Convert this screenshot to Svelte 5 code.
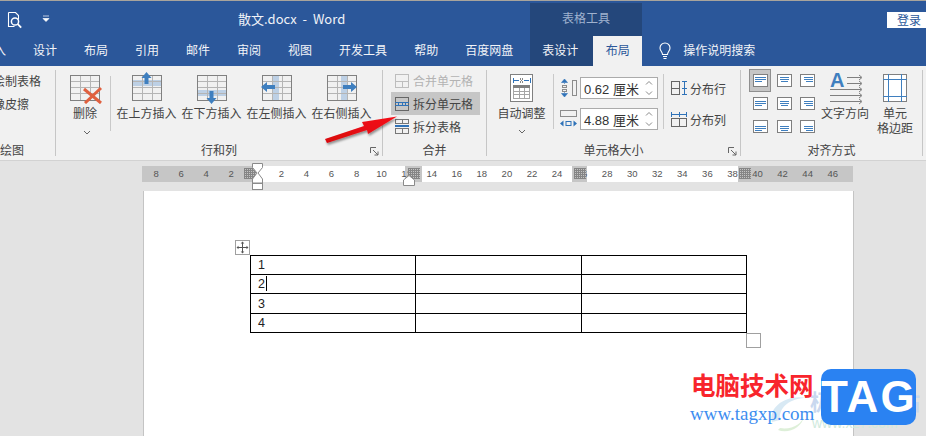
<script>
  const tabs = ['插入','设计','布局','引用','邮件','审阅','视图','开发工具','帮助','百度网盘'];
  const rulerNums = ['8','6','4','2','','2','4','6','8','10','12','14','16','18','20','22','24','26','28','30','32','34','36','38','40','42','44','46'];
  const markers = [244, 408, 574, 739];
  const gridX = [0, 10, 20, 29];
  const gridY = [0, 6, 12, 18, 25];
  const inner = [...Array(9).keys()];
  const rows = ['1','2','3','4'];
  function lineX(col, w) { return col === 0 ? 2 : col === 1 ? 3 : 13 - w; }
  function lineY(row, i) { return (row === 0 ? 2.5 : row === 1 ? 4 : 6) + i * 2; }
</script>

{#snippet grid(x, y)}
  <g transform="translate({x} {y})" shape-rendering="crispEdges">
    {#each gridX.slice(1, 3) as gx}<path d="M{gx + 0.5} 0V25" stroke="#b5b5b5" fill="none" />{/each}
    {#each gridY.slice(1, 4) as gy}<path d="M0 {gy + 0.5}H29" stroke="#b5b5b5" fill="none" />{/each}
    <rect x="0.5" y="0.5" width="29" height="25" fill="none" stroke="#808080" />
  </g>
{/snippet}

<div class="app">
  <header class="titlebar">
    <svg class="preview" width="16" height="20" viewBox="0 0 16 20">
      <path d="M1.5 2.5h7l3 3v4M1.5 2.5v14h6" fill="none" stroke="#fff" stroke-width="1.1" />
      <circle cx="8" cy="11.5" r="3.6" fill="none" stroke="#fff" stroke-width="1.5" />
      <path d="M10.8 14.2l3.4 3.4" stroke="#fff" stroke-width="1.8" />
    </svg>
    <svg class="qa" width="8" height="8" viewBox="0 0 8 8"><path d="M1 1h6M1 3.5h6l-3 3z" fill="#fff" stroke="#fff" stroke-width="0.7" /></svg>
    <div class="doc">散文.docx&nbsp; - &nbsp;Word</div>
    <div class="ctx-head">表格工具</div>
    <button class="login">登录</button>
  </header>

  <nav class="tabs">
    {#each tabs as t}<span class="tab">{t}</span>{/each}
    <span class="tab ctx">表设计</span>
    <span class="tab active">布局</span>
    <svg class="bulb" width="16" height="18" viewBox="0 0 16 18">
      <path d="M5.5 12.5c0-2.5-2.5-3.500-2.500-6.500a5 5 0 0 1 10 0c0 3-2.500 4-2.500 6.500z" fill="none" stroke="#fff" stroke-width="1.100" />
      <path d="M6 14.500h4M6.500 16.500h3" stroke="#fff" stroke-width="1.100" />
    </svg>
    <span class="search">操作说明搜索</span>
  </nav>

  <section class="ribbon">
    <div class="group g-draw">
      <div class="body draw">
        <div class="draw-row a">绘制表格</div>
        <div class="draw-row b">橡皮擦</div>
      </div>
      <div class="label">绘图</div>
    </div>

    <div class="group g-rows">
      <div class="body rowbtns">
        <div class="big del">
          <svg width="36" height="32" viewBox="0 0 36 32">
            {@render grid(3, 3)}
            <path d="M17 17L34 31M34 16L18 31" stroke="#e0603f" stroke-width="3" fill="none" />
          </svg>
          <span>删除</span>
          <svg class="chev" width="8" height="5" viewBox="0 0 8 5"><path d="M1 1l3 3 3-3" fill="none" stroke="#666" /></svg>
        </div>
        <div class="vsep s1"></div>
        <div class="big ins">
          <svg width="36" height="32" viewBox="0 0 36 32">
            <rect x="3" y="8" width="29" height="6" fill="#bdd0e5" />
            {@render grid(3, 3)}
            <path d="M17.500 0l5 6h-3v6h-4V6h-3z" fill="#3f7fbf" />
          </svg>
          <span>在上方插入</span>
        </div>
        <div class="big ins">
          <svg width="36" height="32" viewBox="0 0 36 32">
            <rect x="3" y="18" width="29" height="6" fill="#bdd0e5" />
            {@render grid(3, 3)}
            <path d="M15.500 19h4v7h3l-5 6-5-6h3z" fill="#3f7fbf" />
          </svg>
          <span>在下方插入</span>
        </div>
        <div class="big ins">
          <svg width="36" height="32" viewBox="0 0 36 32">
            <rect x="13" y="3" width="7" height="25" fill="#bdd0e5" />
            {@render grid(3, 3)}
            <path d="M2 15l6-5v3h8v4H8v3z" fill="#3f7fbf" />
          </svg>
          <span>在左侧插入</span>
        </div>
        <div class="big ins">
          <svg width="36" height="32" viewBox="0 0 36 32">
            <rect x="17" y="3" width="7" height="25" fill="#bdd0e5" />
            {@render grid(3, 3)}
            <path d="M33 15l-6-5v3h-8v4h8v3z" fill="#3f7fbf" />
          </svg>
          <span>在右侧插入</span>
        </div>
      </div>
      <div class="label">行和列</div>
      <svg class="launch" width="9" height="9" viewBox="0 0 9 9"><path d="M.5 6V.5H6M3 3l5 5M8 4.500V8H4.500" fill="none" stroke="#666" /></svg>
    </div>

    <div class="group g-merge">
      <div class="body merge">
        <div class="mrow dim">
          <svg width="14" height="14" viewBox="0 0 14 14" shape-rendering="crispEdges"><path d="M.5.500h13v13H.500zM.5 7h13M7 7v6.500" fill="none" stroke="#bdbdbd" /></svg>
          <span>合并单元格</span>
        </div>
        <div class="mrow hot">
          <svg width="14" height="14" viewBox="0 0 14 14" shape-rendering="crispEdges"><path d="M.5.500h13v13H.500z" fill="none" stroke="#666" /><path d="M0 5.500h14M0 8.500h14M3.500 5v4M7 5v4M10.500 5v4" fill="none" stroke="#2f72b8" /></svg>
          <span>拆分单元格</span>
        </div>
        <div class="mrow">
          <svg width="14" height="15" viewBox="0 0 14 15" shape-rendering="crispEdges"><path d="M.5.500h13v4H.500zM.5 9.500h13v5H.500zM7 9.500v5M7 .5v4" fill="none" stroke="#777" /><path d="M0 7h14" stroke="#2f72b8" stroke-width="1.500" /></svg>
          <span>拆分表格</span>
        </div>
      </div>
      <div class="label">合并</div>
    </div>

    <div class="group g-size">
      <div class="body sizes">
        <div class="big auto">
          <svg width="24" height="28" viewBox="0 0 24 28" shape-rendering="crispEdges">
            <rect x=".5" y=".5" width="22" height="27" fill="#fff" stroke="#808080" />
            <path d="M3 4v5M20 4v5M4 6.500h5M14 6.500h5" stroke="#2f72b8" fill="none" />
            <path d="M10 4.500l3 4M13 4.500l-3 4" stroke="#888" fill="none" />
            <rect x="3" y="11" width="17" height="3" fill="#7f7f7f" />
            <path d="M3.500 14v10h16V14M3 17.500h17M3 20.500h17M9 14v10M14 14v10" fill="none" stroke="#a5a5a5" />
          </svg>
          <span>自动调整</span>
          <svg class="chev" width="8" height="5" viewBox="0 0 8 5"><path d="M1 1l3 3 3-3" fill="none" stroke="#666" /></svg>
        </div>
        <div class="vsep s2"></div>
        <div class="spins">
          <div class="spin">
            <svg width="17" height="18" viewBox="0 0 17 18">
              <rect x="12.500" y="1.500" width="4" height="15" fill="none" stroke="#8c8c8c" />
              <path d="M4.500 0l3 3.500h-6zM4.500 18l3-3.500h-6zM4.500 4v1M4.500 13v1" fill="#2f72b8" stroke="#2f72b8" stroke-width=".6" />
              <rect x="2.500" y="6.500" width="4" height="2" fill="none" stroke="#8c8c8c" /><rect x="2.500" y="10.500" width="4" height="2" fill="none" stroke="#8c8c8c" />
            </svg>
            <div class="input"><span>0.62 厘米</span>
              <svg width="8" height="16" viewBox="0 0 8 16"><path d="M1 4.500l3-3 3 3M1 11.500l3 3 3-3" fill="none" stroke="#8a8a8a" /></svg>
            </div>
          </div>
          <div class="spin">
            <svg width="17" height="18" viewBox="0 0 17 18">
              <rect x=".5" y=".5" width="16" height="6" fill="none" stroke="#8c8c8c" />
              <path d="M0 13.500l3.500-3v6zM17 13.500l-3.500-3v6z" fill="#2f72b8" />
              <rect x="6" y="11.500" width="5" height="4" fill="none" stroke="#2f72b8" />
            </svg>
            <div class="input"><span>4.88 厘米</span>
              <svg width="8" height="16" viewBox="0 0 8 16"><path d="M1 4.500l3-3 3 3M1 11.500l3 3 3-3" fill="none" stroke="#8a8a8a" /></svg>
            </div>
          </div>
        </div>
        <div class="vsep s3"></div>
        <div class="dist">
          <div class="drow">
            <svg width="16" height="14" viewBox="0 0 16 14" shape-rendering="crispEdges"><path d="M.5.500h8v13h-8zM.5 7h8" fill="none" stroke="#666" /><path d="M11 .5h5M11 13.500h5M13.500 0v14" fill="none" stroke="#2f72b8" /><path d="M11 7h5" stroke="#2f72b8" /></svg>
            <span>分布行</span>
          </div>
          <div class="drow">
            <svg width="16" height="15" viewBox="0 0 16 15" shape-rendering="crispEdges"><path d="M.5 6.500h15v8H.5zM8 6.500v8" fill="none" stroke="#666" /><path d="M.5 0v5M8 0v5M15.500 0v5M0 2.500h16" fill="none" stroke="#2f72b8" /></svg>
            <span>分布列</span>
          </div>
        </div>
      </div>
      <div class="label">单元格大小</div>
      <svg class="launch" width="9" height="9" viewBox="0 0 9 9"><path d="M.5 6V.5H6M3 3l5 5M8 4.500V8H4.500" fill="none" stroke="#666" /></svg>
    </div>

    <div class="group g-align">
      <div class="body aligns">
        <div class="agrid">
          {#each inner as n}
            <div class="acell" class:sel={n === 0}>
              <svg width="15" height="13" viewBox="0 0 15 13" shape-rendering="crispEdges">
                <rect x=".5" y=".5" width="14" height="12" fill="#fff" stroke="#7f7f7f" />
                {#each [0, 1, 2] as i}
                  <rect x={lineX(n % 3, n % 3 === 0 ? 11 : 9) + (i === 2 && n % 3 !== 0 ? (n % 3 === 1 ? 1 : 2) : 0)} y={lineY(Math.floor(n / 3), i)} width={n % 3 === 0 ? (i === 2 ? 7 : 11) : (i === 2 ? 7 : 9)} height="1" fill="#3f7fbf" />
                {/each}
              </svg>
            </div>
          {/each}
        </div>
        <div class="big dir">
          <svg width="36" height="32" viewBox="0 0 36 32">
            <text x="3" y="14" class="bigA">A</text>
            <path d="M20 4.500h14M20 10.500h14M3 16.500h31M3 22.500h31M3 28.500h31" stroke="#7f7f7f" fill="none" />
            <path d="M32 2l3 2.500-3 2.500M32 8l3 2.500-3 2.500M32 14l3 2.500-3 2.500M32 20l3 2.500-3 2.500M32 26l3 2.500-3 2.500" stroke="#7f7f7f" fill="none" />
          </svg>
          <span>文字方向</span>
        </div>
        <div class="big margin">
          <svg width="24" height="28" viewBox="0 0 24 28" shape-rendering="crispEdges">
            <rect x=".5" y=".5" width="23" height="27" fill="#fff" stroke="#808080" />
            <path d="M5.500 0v28M18.500 0v28M0 5.500h24M0 22.500h24" stroke="#3f7fbf" fill="none" />
          </svg>
          <span>单元<br />格边距</span>
        </div>
      </div>
      <div class="label">对齐方式</div>
    </div>
  </section>

  <main class="canvas">
    <div class="ruler">
      <div class="band">
        {#each rulerNums as num}<span class="num">{num}</span>{/each}
      </div>
      {#each markers as left}<i class="mark" style:left="{left - 142}px"></i>{/each}
      <svg class="indent" width="13" height="28" viewBox="0 0 13 28">
        <path d="M1.500 .5h10v4L7 10l4.500 6v4h-10v-4L6 10 1.500 4.500z" fill="#fff" stroke="#8a8a8a" />
        <rect x="1.500" y="20.500" width="10" height="6" fill="#fff" stroke="#8a8a8a" />
      </svg>
      <svg class="rindent" width="12" height="11" viewBox="0 0 12 11"><path d="M.5 10.500V5L6 .5 11.500 5v5.500z" fill="#fff" stroke="#8a8a8a" /></svg>
    </div>

    <div class="page">
      <div class="tablewrap">
        <svg class="move" width="15" height="15" viewBox="0 0 15 15">
          <rect x=".5" y=".5" width="14" height="14" fill="#fff" stroke="#a0a0a0" />
          <path d="M7.500 2.500v10M2.500 7.500h10" stroke="#555" />
          <path d="M7.500 1.500l1.800 2h-3.600zM7.500 13.500l1.800-2h-3.600zM1.500 7.500l2-1.800v3.600zM13.500 7.500l-2-1.800v3.600z" fill="#555" />
        </svg>
        <table>
          <tbody>
            {#each rows as r, i}
              <tr class:tall={i === 2}>
                <td>{r}{#if i === 1}<i class="caret"></i>{/if}</td><td></td><td></td>
              </tr>
            {/each}
          </tbody>
        </table>
        <div class="end"></div>
      </div>
    </div>
  </main>

  <svg class="arrow" width="926" height="436" viewBox="0 0 926 436">
    <defs>
      <linearGradient id="red" x1="0" y1="1" x2="1" y2="0">
        <stop offset="0" stop-color="#d8060c" />
        <stop offset="1" stop-color="#f5121a" />
      </linearGradient>
      <filter id="sh" x="-20%" y="-30%" width="140%" height="170%"><feDropShadow dx="1" dy="2" stdDeviation="1.200" flood-color="#000" flood-opacity=".4" /></filter>
    </defs>
    <polygon points="325,139 364,126 362,122 397,116.500 368,134 367,130 327,143" fill="url(#red)" filter="url(#sh)" />
  </svg>

  <div class="mark-site">
    <div class="faint cn">极光下载站</div>
    <div class="faint en">www.xz7.com</div>
    <svg class="swirl" width="46" height="46" viewBox="0 0 46 46"><path d="M6 32C2 16 22 4 40 8 24 8 12 18 14 30" fill="#c8dff0" opacity=".7" /><path d="M12 40c10 4 24-2 26-14-2 8-12 14-24 12z" fill="#cfe8c8" opacity=".7" /></svg>
    <div class="site">电脑技术网</div>
    <div class="url">www.tagxp.com</div>
    <div class="tag">TAG</div>
  </div>
</div>

<style>
  :global(body) { margin: 0; }
  .app {
    position: relative;
    width: 926px;
    height: 436px;
    overflow: hidden;
    display: flex;
    flex-direction: column;
    background: #e3e3e3;
    font-family: "Noto Sans CJK SC", "Liberation Sans", sans-serif;
    font-size: 12px;
    color: #444;
    border-top: 1px solid #a8a49c;
    box-sizing: border-box;
  }
  svg { display: block; flex: none; }

  .titlebar {
    height: 35px;
    flex: none;
    background: #2b579a;
    display: flex;
    align-items: flex-start;
    color: #fff;
  }
  .preview { margin: 9px 0 0 7px; }
  .qa { margin: 14px 0 0 19px; }
  .doc { width: 292px; margin-left: 188px; margin-top: 9px; font-size: 13px; line-height: 18px; color: #f0f3f8; white-space: nowrap; }
  .ctx-head {
    margin-top: 2px;
    width: 112px;
    height: 33px;
    background: #24477b;
    color: #9fb2cf;
    text-align: center;
    line-height: 30px;
  }
  .login {
    margin: 11px 0 0 245px;
    width: 39px;
    height: 16px;
    padding: 0 0 0 5px;
    border: 0;
    background: #fff;
    color: #2b579a;
    font: inherit;
    line-height: 16px;
  }

  .tabs {
    height: 30px;
    flex: none;
    background: #2b579a;
    display: flex;
    align-items: stretch;
    margin-left: -31.5px;
    color: #f2f4f8;
    white-space: nowrap;
  }
  .tab { padding: 0 13.5px; line-height: 28px; flex: none; }
  .tab.ctx { background: #24477b; width: 36px; padding: 0 15px 0 12px; margin-left: 3.5px; }
  .tab.active { background: #f1f1f1; color: #2b579a; padding: 0 12.5px; }
  .bulb { margin: 6px 0 0 15px; }
  .search { margin-left: 10px; line-height: 28px; }

  .ribbon {
    height: 95px;
    flex: none;
    box-sizing: border-box;
    background: #f1f1f1;
    border-bottom: 1px solid #d2d2d2;
    display: flex;
    padding-top: 4px;
  }
  .group {
    position: relative;
    display: flex;
    flex-direction: column;
    height: 86px;
    box-sizing: border-box;
    border-right: 1px solid #c6c6c6;
    flex: none;
  }
  .body { height: 71px; flex: none; display: flex; }
  .label { height: 15px; line-height: 17px; text-align: center; color: #444; white-space: nowrap; }
  .launch { position: absolute; right: 3px; bottom: 0; }
  .g-draw { width: 56px; overflow: hidden; }
  .g-rows { width: 327px; }
  .g-merge { width: 104px; }
  .g-size { width: 254px; }
  .g-align { width: 182px; }

  .draw { flex-direction: column; align-items: flex-end; margin-top: -1px; margin-bottom: 1px; }
  .draw-row { white-space: nowrap; height: 23px; line-height: 23px; }
  .draw-row.a { margin-right: 14px; }
  .draw-row.b { margin-right: 26px; }
  .g-draw .label { text-align: right; padding-right: 34px; }

  .big { display: flex; flex-direction: column; align-items: center; white-space: nowrap; }
  .big span { line-height: 16px; text-align: center; }
  .big > svg:first-child { height: 32px; }
  .big .chev { margin-top: 7px; }
  .rowbtns { padding-left: 7px; padding-top: 2px; box-sizing: border-box; }
  .del { width: 44px; }
  .ins { width: 65px; }
  .ins span, .del span { margin-top: 1px; }
  .del .chev { margin-top: 9px; margin-left: 4px; }
  .vsep { width: 1px; background: #c9c9c9; height: 55px; margin-top: 4px; flex: none; }
  .s1 { margin: 4px 3px 0 3px; }

  .merge { flex-direction: column; padding-left: 8px; margin-top: -1px; margin-bottom: 1px; }
  .mrow {
    width: 89px;
    height: 23px;
    flex: none;
    box-sizing: border-box;
    display: flex;
    align-items: center;
    gap: 4px;
    padding-left: 4px;
    color: #444;
  }
  .mrow.dim { color: #b3b3b3; }
  .mrow.hot { background: #c6c6c6; }

  .sizes { padding-left: 4px; padding-top: 4px; box-sizing: border-box; }
  .auto { width: 61px; }
  .auto > svg:first-child { height: 28px; }
  .auto span { margin-top: 3px; }
  .auto .chev { margin-top: 8px; }
  .s2 { margin: 0 6px 0 1px; }
  .spins { display: flex; flex-direction: column; gap: 9px; margin-top: 3px; }
  .spin { display: flex; align-items: center; gap: 3px; height: 22px; }
  .input {
    width: 78px;
    height: 22px;
    box-sizing: border-box;
    background: #fff;
    border: 1px solid #ababab;
    display: flex;
    align-items: center;
    justify-content: space-between;
    padding: 0 4px 0 3px;
    font-size: 13px;
    color: #333;
    white-space: pre;
  }
  .input span { font-family: "Liberation Sans", "Noto Sans CJK SC", sans-serif; }
  .s3 { margin: 0 7px 0 5px; }
  .dist { display: flex; flex-direction: column; gap: 9px; margin-top: 3px; }
  .drow { display: flex; align-items: center; gap: 3px; height: 22px; }

  .aligns { padding-left: 8px; }
  .agrid {
    display: grid;
    grid-template-columns: repeat(3, 23.5px);
    grid-template-rows: 23px 23px 23px;
    width: 71px;
    margin-top: -1px;
  }
  .acell { display: flex; align-items: center; justify-content: center; box-sizing: border-box; }
  .acell.sel { background: #c6c6c6; border: 1px solid #8f8f8f; width: 22px; }
  .dir { width: 48px; margin-left: 1px; padding-top: 3px; }
  .dir svg { height: 32px; }
  .bigA { font: 700 20px "Liberation Sans", sans-serif; fill: #3f7fbf; }
  .margin { width: 36px; margin-left: 8px; padding-top: 4px; }
  .margin > svg:first-child { height: 28px; }
  .margin span { margin-top: 3px; line-height: 15px; }

  .canvas { flex: 1; min-height: 0; display: flex; flex-direction: column; }
  .ruler { position: relative; height: 30px; flex: none; margin-left: 142px; width: 711px; padding-top: 5px; box-sizing: border-box; }
  .band {
    height: 16px;
    display: flex;
    padding-left: 1.500px;
    box-sizing: border-box;
    background: linear-gradient(90deg,
      #c6c6c6 0 114px, #fff 114px 263px, #c6c6c6 263px 280px, #fff 280px 430px,
      #c6c6c6 430px 445px, #fff 445px 596px, #c6c6c6 596px 711px);
  }
  .num {
    width: 25.070px;
    flex: none;
    text-align: center;
    font: 9.500px/16px "Liberation Sans", sans-serif;
    color: #555;
  }
  .mark {
    position: absolute;
    top: 7px;
    width: 12px;
    height: 11px;
    background-color: #c4c4c4;
    background-image:
      repeating-linear-gradient(90deg, #858585 0 1px, transparent 1px 2px),
      repeating-linear-gradient(0deg, #858585 0 1px, transparent 1px 2px);
  }
  .indent { position: absolute; left: 109px; top: 2px; }
  .rindent { position: absolute; left: 261px; top: 14px; }

  .page {
    flex: 1;
    margin-left: 143px;
    width: 711px;
    box-sizing: border-box;
    background: #fff;
    border-left: 1px solid #c4c4c4;
    border-right: 1px solid #c4c4c4;
    padding: 64px 0 0 106px;
  }
  .tablewrap { position: relative; width: 497px; }
  .move { position: absolute; left: -15px; top: -15px; }
  table {
    width: 497px;
    height: 76px;
    border-collapse: collapse;
    table-layout: fixed;
  }
  td {
    border: 1px solid #000;
    padding: 1px 0 0 7px;
    font: 12.500px/17px "Liberation Sans", sans-serif;
    color: #222;
    height: 17px;
    box-sizing: content-box;
  }
  tr.tall td { height: 18px; }
  .caret { display: inline-block; width: 1px; height: 15px; background: #000; vertical-align: -3px; margin-left: 1px; }
  .end { position: absolute; right: -14px; top: 78px; width: 13px; height: 13px; border: 1px solid #a0a0a0; background: #fff; }

  .arrow { position: absolute; left: 0; top: -1px; pointer-events: none; }

  .mark-site { position: absolute; inset: 0; pointer-events: none; }
  .site { position: absolute; left: 691px; top: 369px; font: 700 24.500px/30px "Noto Sans CJK SC", sans-serif; color: #f8252c; white-space: nowrap; }
  .url { position: absolute; left: 690px; top: 403px; font: 400 19px/20px "Liberation Serif", serif; color: #3d8def; white-space: nowrap; }
  .tag {
    position: absolute;
    left: 821px;
    top: 368px;
    width: 95px;
    height: 56px;
    border-radius: 10px;
    background: #2a82f2;
    color: #fff;
    font: 700 44px/56px "Liberation Sans", sans-serif;
    text-align: center;
    letter-spacing: 2px;
  }
  .faint { position: absolute; white-space: nowrap; }
  .cn { left: 810px; top: 385px; font: 700 22px/28px "Noto Sans CJK SC", sans-serif; color: #c9d8ef; }
  .en { left: 812px; top: 414px; font: 400 14px/16px "Liberation Sans", sans-serif; color: #cfeadd; }
  .swirl { position: absolute; left: 766px; top: 389px; }
</style>
